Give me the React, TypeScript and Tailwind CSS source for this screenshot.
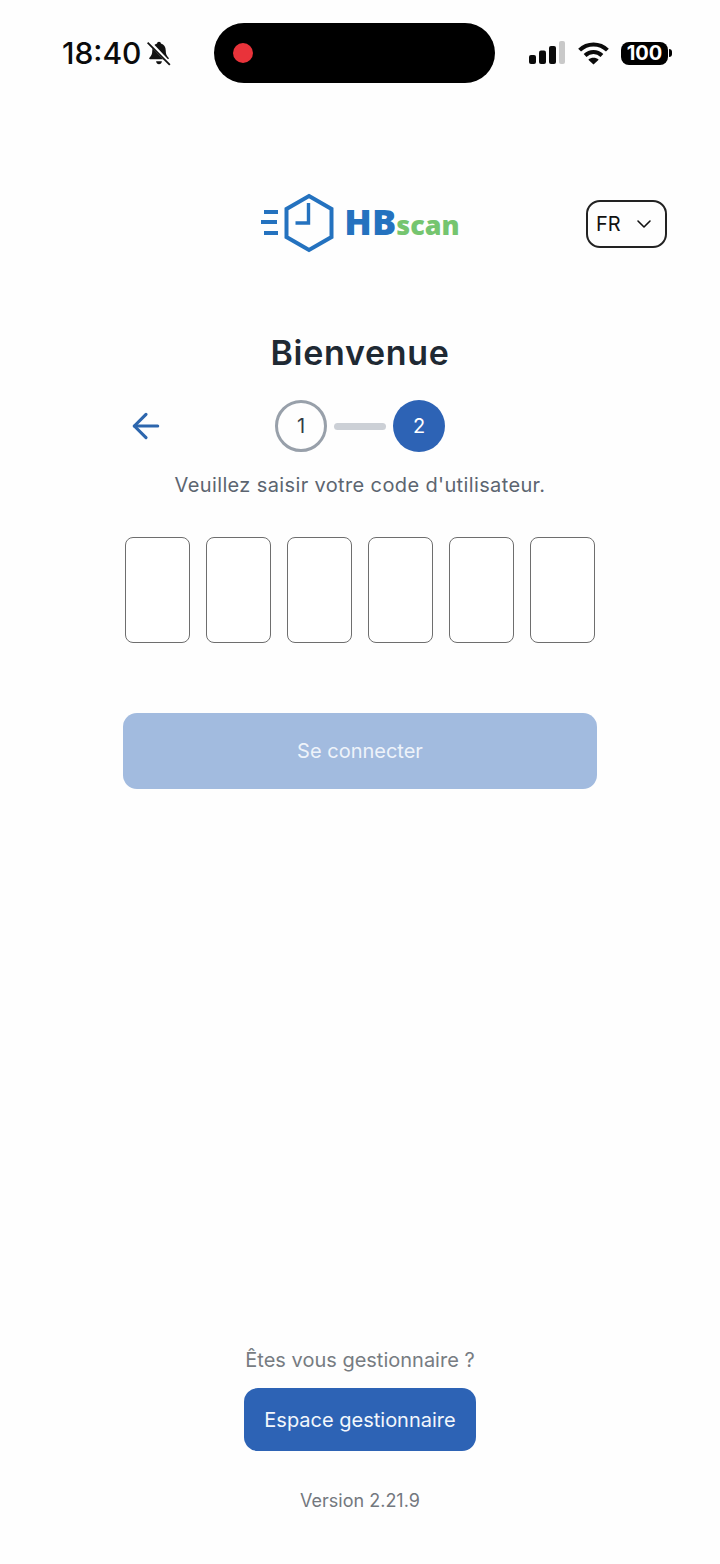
import { ArrowLeft, ChevronDown } from 'lucide-react';

const font = { fontFamily: 'Inter, "Noto Sans", sans-serif' };

function StatusBar() {
  return (
    <div className="relative flex h-[100px] items-start">
      <div className="flex items-center pl-[62px] pt-[35px]">
        <span className="text-[30px] leading-[36px] font-medium text-[#0b0b0b]">18:40</span>
        <svg viewBox="0 0 24 24" className="ml-[5px] h-[26px] w-[26px]">
          <path d="M12 1.500c1 0 1.700.7 1.800 1.700 2.900.8 4.400 3.200 4.400 6.300 0 3.400.9 5.200 2.600 6.800.6.6.2 1.400-.6 1.400H3.800c-.8 0-1.200-.8-.6-1.400 1.700-1.600 2.600-3.400 2.600-6.800 0-3.100 1.500-5.500 4.400-6.300.1-1 .8-1.700 1.800-1.700z" fill="#111" />
          <path d="M9.300 19.500h5.400c-.2 1.600-1.300 2.800-2.700 2.800s-2.500-1.200-2.700-2.800z" fill="#111" />
          <path d="M2.500 1.500 23 23" stroke="#fff" strokeWidth="3.400" />
          <path d="M1.500 2.500 22 23" stroke="#111" strokeWidth="1.700" />
        </svg>
      </div>
      <div className="absolute left-[214px] top-[23px] flex h-[60px] w-[281px] items-center rounded-[30px] bg-black pl-[19px]">
        <div className="h-5 w-5 rounded-full bg-[#e9333a]" />
      </div>
      <div className="ml-auto flex items-center pr-[48px] pt-[41px]">
        <svg viewBox="0 0 36 24" className="h-[24px] w-[36px]">
          <rect x="0" y="14" width="7" height="9" rx="2" fill="#0b0b0b" />
          <rect x="10" y="9.500" width="7" height="13.500" rx="2" fill="#0b0b0b" />
          <rect x="20" y="5" width="7" height="18" rx="2" fill="#0b0b0b" />
          <rect x="30" y="0" width="6" height="23" rx="2" fill="#c9c9c9" />
        </svg>
        <svg viewBox="0 0 32 24" className="ml-[13px] h-[23px] w-[31px]">
          <path d="M1.500 8.500C9.500.5 22.500.5 30.500 8.500" fill="none" stroke="#0b0b0b" strokeWidth="4.200" />
          <path d="M7.200 14C12.300 9.200 19.700 9.200 24.800 14" fill="none" stroke="#0b0b0b" strokeWidth="4.200" />
          <path d="M16 23.500 10.600 18.400c3-2.700 7.800-2.700 10.800 0z" fill="#0b0b0b" />
        </svg>
        <div className="ml-[12px] flex h-[23px] w-[47px] items-center justify-center rounded-[8px] bg-black text-[20px] leading-none font-bold text-white">
          100
        </div>
        <div className="ml-[1px] h-[8px] w-[3px] rounded-r-full bg-black" />
      </div>
    </div>
  );
}

function Logo() {
  return (
    <div className="flex items-center">
      <svg viewBox="0 0 74 60" className="h-[60px] w-[74px] text-[#2472bf]">
        <path d="M49 3 71.500 16V44L49 57 26.500 44V16z" fill="none" stroke="currentColor" strokeWidth="4" />
        <path d="M48.500 10V30H35.500" fill="none" stroke="currentColor" strokeWidth="3.400" />
        <path d="M4 19h14M1 29h16M4 40h14" fill="none" stroke="currentColor" strokeWidth="3.800" />
      </svg>
      <div className="ml-[10px] flex items-baseline pb-[3px]" style={{ fontFamily: '"Open Sans", sans-serif' }}>
        <span className="text-[36px] leading-none font-extrabold text-[#2472bf]">HB</span>
        <span className="text-[27px] leading-none font-extrabold text-[#75c56f]">scan</span>
      </div>
    </div>
  );
}

export default function App() {
  return (
    <div className="flex h-[1564px] w-[720px] flex-col bg-[#fefefe]" style={font}>
      <StatusBar />

      <div className="mt-[93px] grid grid-cols-[1fr_auto_1fr] items-center">
        <div />
        <Logo />
        <div className="flex justify-end pr-[53px] pt-[2px]">
          <button className="flex h-[48px] w-[81px] items-center justify-between rounded-[14px] border-2 border-[#222] pl-[8px] pr-[9px] text-[20px] text-[#111]">
            FR
            <ChevronDown className="h-[24px] w-[24px]" strokeWidth={1.6} />
          </button>
        </div>
      </div>

      <h1 className="mt-[75px] text-center text-[34px] leading-[50px] font-semibold tracking-[0.7px] text-[#1f2933]">Bienvenue</h1>

      <div className="mx-auto mt-[22px] grid w-[474px] grid-cols-[1fr_auto_1fr] items-center">
        <ArrowLeft className="ml-[3px] h-[40px] w-[40px] text-[#2d66ad]" strokeWidth={1.9} />
        <div className="flex items-center gap-[7px]">
          <div className="flex h-[52px] w-[52px] items-center justify-center rounded-full border-[3px] border-[#98a0aa] text-[20px] text-[#343c46]">1</div>
          <div className="h-[7px] w-[52px] rounded-full bg-[#ccd0d6]" />
          <div className="flex h-[52px] w-[52px] items-center justify-center rounded-full bg-[#2d63b5] text-[20px] text-white">2</div>
        </div>
        <div />
      </div>

      <p className="mt-[19px] text-center text-[20px] leading-[28px] tracking-[0.37px] text-[#5c6570]">Veuillez saisir votre code d'utilisateur.</p>

      <div className="mx-auto mt-[38px] flex w-[471px] justify-between">
        {[0, 1, 2, 3, 4, 5].map((i) => (
          <div key={i} className="h-[106px] w-[65px] rounded-[8px] border border-[#6e6e6e] bg-white" />
        ))}
      </div>

      <button className="mx-auto mt-[70px] flex h-[76px] w-[474px] items-center justify-center rounded-[14px] bg-[#a2bbdf] text-[20px] text-[#eef3fa]">
        Se connecter
      </button>

      <div className="mt-auto flex flex-col items-center pb-[50px]">
        <p className="text-[20px] leading-[28px] text-[#777c82]">Êtes vous gestionnaire ?</p>
        <button className="mt-[14px] flex h-[63px] w-[232px] items-center justify-center rounded-[14px] bg-[#2d63b5] text-[20px] text-[#f2f7fc]">
          Espace gestionnaire
        </button>
        <p className="mt-[37px] text-[18px] leading-[26px] text-[#73787e]">Version 2.21.9</p>
      </div>
    </div>
  );
}
